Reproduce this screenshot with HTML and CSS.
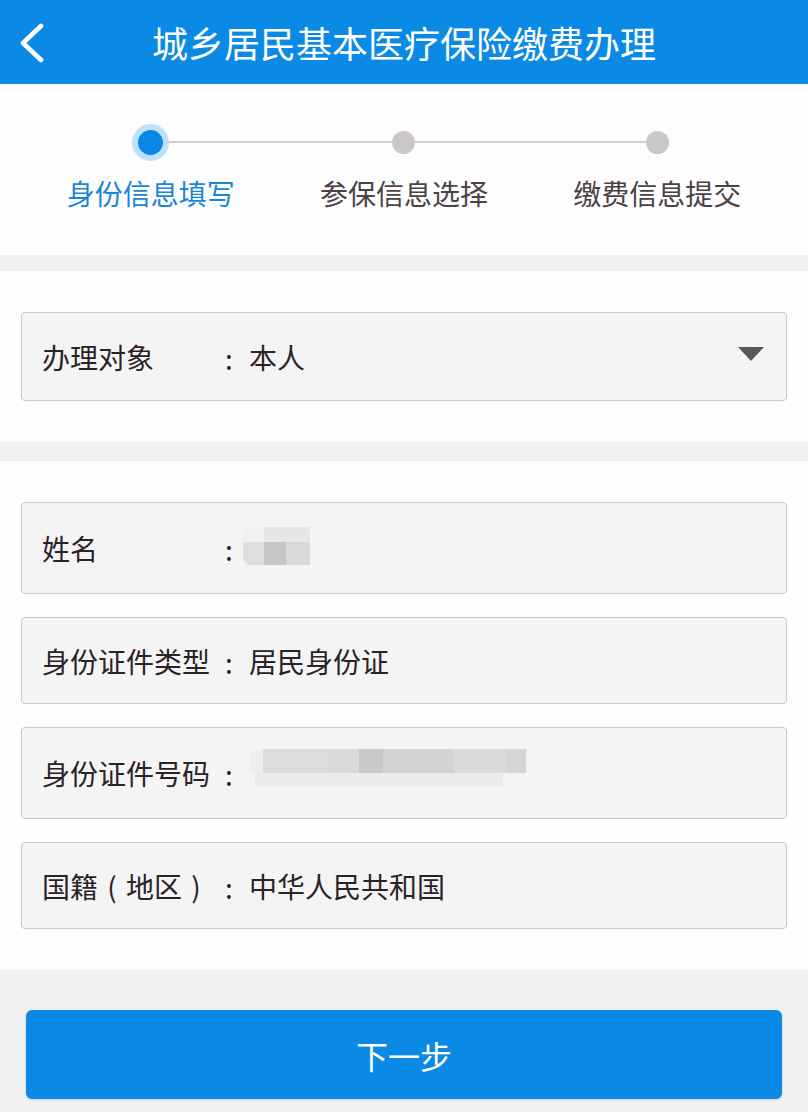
FILE: index.html
```html
<!DOCTYPE html>
<html lang="zh-CN">
<head>
<meta charset="utf-8">
<title>城乡居民基本医疗保险缴费办理</title>
<link rel="stylesheet" href="styles.css">
</head>
<body>
<div class="page">
  <header class="topbar">
    <div class="back">
      <svg width="26" height="40" viewBox="0 0 26 40" aria-hidden="true">
        <path d="M22 3 L4 20 L22 37" fill="none" stroke="#ffffff" stroke-width="4.6" stroke-linecap="round" stroke-linejoin="round"/>
      </svg>
    </div>
    <h1 class="title">城乡居民基本医疗保险缴费办理</h1>
    <div></div>
  </header>

  <section class="steps">
    <div class="step active">
      <div class="dot-wrap"><span class="dot"></span></div>
      <div class="step-label">身份信息填写</div>
    </div>
    <div class="step">
      <div class="dot-wrap"><span class="dot"></span></div>
      <div class="step-label">参保信息选择</div>
    </div>
    <div class="step">
      <div class="dot-wrap"><span class="dot"></span></div>
      <div class="step-label">缴费信息提交</div>
    </div>
  </section>

  <div class="band band-a"></div>

  <section class="panel">
    <div class="field field-select">
      <span class="label">办理对象</span>
      <span class="colon">:</span>
      <span class="value">本人</span>
      <span class="caret"></span>
    </div>
  </section>

  <div class="band band-b"></div>

  <section class="panel panel-list">
    <div class="field field-tall">
      <span class="label">姓名</span>
      <span class="colon">:</span>
      <span class="blur blur-name"></span>
    </div>
    <div class="field">
      <span class="label">身份证件类型</span>
      <span class="colon">:</span>
      <span class="value">居民身份证</span>
    </div>
    <div class="field field-tall">
      <span class="label">身份证件号码</span>
      <span class="colon">:</span>
      <span class="blur blur-id"></span>
    </div>
    <div class="field">
      <span class="label">国籍<span class="paren">(</span>地区<span class="paren">)</span></span>
      <span class="colon">:</span>
      <span class="value">中华人民共和国</span>
    </div>
  </section>

  <footer class="footer">
    <button class="next" type="button">下一步</button>
  </footer>
</div>
</body>
</html>
```

FILE: styles.css
```css
html, body {
  margin: 0;
  padding: 0;
  background: #fdfdfe;
}

body {
  font-family: "Noto Sans CJK SC", "Noto Sans", sans-serif;
  color: #2a2226;
  overflow: hidden;
}

.page {
  width: 808px;
}

.topbar {
  height: 84px;
  background: #0a8ae4;
  display: grid;
  grid-template-columns: 1fr auto 1fr;
  align-items: center;
}

.back {
  padding-left: 19px;
  display: flex;
  align-items: center;
  height: 84px;
  padding-top: 2px;
  box-sizing: border-box;
}

.back svg {
  display: block;
}

.title {
  margin: 0;
  font-size: 36px;
  font-weight: 400;
  color: #ffffff;
  line-height: 84px;
  letter-spacing: 0;
}

.steps {
  position: relative;
  height: 171px;
  box-sizing: border-box;
  padding: 39px 24px 0;
  display: grid;
  grid-template-columns: repeat(3, 1fr);
  background: #fdfdfe;
}

.steps::before {
  content: "";
  position: absolute;
  top: 57px;
  left: 151px;
  right: 151px;
  height: 2px;
  background: #cfcfcf;
}

.step {
  display: flex;
  flex-direction: column;
  align-items: center;
  position: relative;
}

.dot-wrap {
  height: 38px;
  display: flex;
  align-items: center;
  justify-content: center;
}

.dot {
  width: 23px;
  height: 23px;
  border-radius: 50%;
  background: #ccc8c7;
}

.step.active .dot {
  width: 25px;
  height: 25px;
  background: #0a86e4;
  box-shadow: 0 0 0 6px #bde0fb;
}

.step-label {
  margin-top: 12px;
  font-size: 28px;
  line-height: 40px;
  color: #4a4245;
}

.step.active .step-label {
  color: #1b86d6;
}

.band {
  background: #f0f0f2;
}

.band-a {
  height: 16px;
}

.band-b {
  height: 19px;
}

.panel {
  padding: 41px 21px;
  background: #fdfdfe;
}

.panel-list {
  display: flex;
  flex-direction: column;
  gap: 23px;
}

.field {
  height: 87px;
  box-sizing: border-box;
  border: 1px solid #c8c8ca;
  border-radius: 4px;
  background: #f4f4f5;
  display: flex;
  align-items: center;
  padding: 0 22px 0 20px;
  font-size: 28px;
}

.field-select {
  height: 89px;
}

.field-tall {
  height: 92px;
}

.label {
  width: 177px;
  flex: none;
  white-space: nowrap;
}

.paren {
  display: inline-block;
  width: 28px;
  text-align: center;
}

.colon {
  width: 20px;
  flex: none;
  text-align: center;
  margin-top: 2px;
}

.value {
  margin-left: 10px;
  white-space: nowrap;
}

.caret {
  margin-left: auto;
  width: 0;
  height: 0;
  border-left: 13px solid transparent;
  border-right: 13px solid transparent;
  border-top: 14px solid #585858;
  margin-top: -6px;
}

.blur {
  display: block;
  flex: none;
}

.blur-name {
  margin-left: 4px;
  width: 67px;
  height: 38px;
  margin-top: -4px;
  border-radius: 8px 0 0 8px;
  background:
    linear-gradient(#f1f1f1, #f1f1f1) 0 0 / 21px 15px no-repeat,
    linear-gradient(#e7e7e7, #e7e7e7) 21px 0 / 46px 15px no-repeat,
    linear-gradient(to right, #dedede 0 21px, #c6c6c6 21px 43px, #d9d9d9 43px 67px) 0 15px / 67px 23px no-repeat;
}

.blur-id {
  margin-left: 10px;
  width: 277px;
  height: 42px;
  background:
    linear-gradient(to right, #eeeeee 0 14px, #dcdcdc 14px 80px, #d9d9d9 80px 110px, #c9c9c9 110px 134px, #d3d3d3 134px 205px, #dadada 205px 257px, #d5d5d5 257px 277px) 0 0 / 277px 24px no-repeat,
    linear-gradient(#ebebeb, #ebebeb) 6px 24px / 248px 14px no-repeat;
  border-radius: 10px 0 0 12px;
  margin-top: -6px;
}

.footer {
  background: #f0f0f2;
  height: 142px;
  box-sizing: border-box;
  padding: 40px 26px 0;
}

.next {
  display: block;
  width: 100%;
  height: 89px;
  border: none;
  border-radius: 6px;
  background: #0a8ae4;
  color: #ffffff;
  font-family: "Noto Sans CJK SC", "Noto Sans", sans-serif;
  font-size: 32px;
  padding: 0;
  box-shadow: 0 1px 2px rgba(0, 0, 0, 0.15);
}
```
